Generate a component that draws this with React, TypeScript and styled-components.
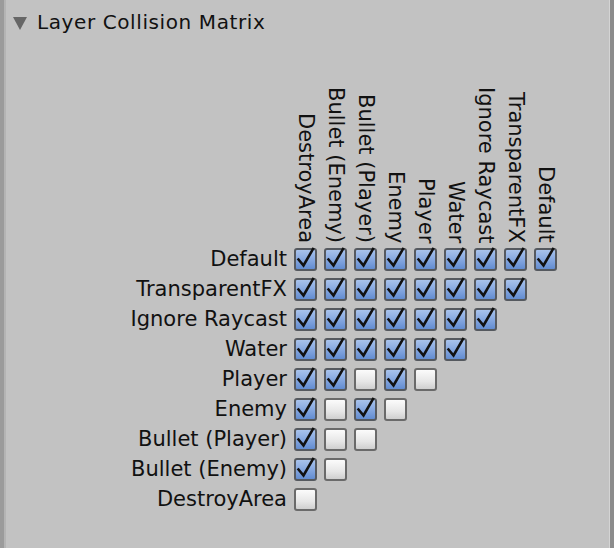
import styled, { createGlobalStyle } from 'styled-components';

const layers = [
	'Default',
	'TransparentFX',
	'Ignore Raycast',
	'Water',
	'Player',
	'Enemy',
	'Bullet (Player)',
	'Bullet (Enemy)',
	'DestroyArea',
];

// rows: one entry per layer, columns run from the last layer back to the row's own layer
const matrix: boolean[][] = [
	[true, true, true, true, true, true, true, true, true],
	[true, true, true, true, true, true, true, true],
	[true, true, true, true, true, true, true],
	[true, true, true, true, true, true],
	[true, true, false, true, false],
	[true, false, true, false],
	[true, false, false],
	[true, false],
	[false],
];

const GlobalStyle = createGlobalStyle`
	html, body {
		margin: 0;
		padding: 0;
		height: 100%;
		background: #c2c2c2;
	}
	#root {
		height: 100%;
	}
`;

export default function App() {
	const columns = [...layers].reverse();

	return (
		<>
			<GlobalStyle />
			<Panel>
				<Header>
					<Foldout width="14" height="14" viewBox="0 0 14 14">
						<polygon points="0,1 14,1 7,14" />
					</Foldout>
					<Title>Layer Collision Matrix</Title>
				</Header>
				<Matrix>
					<Corner />
					{columns.map(name => (
						<ColumnLabel key={name}>{name}</ColumnLabel>
					))}
					{layers.map((name, row) => (
						<Row key={name}>
							<RowLabel>{name}</RowLabel>
							{matrix[row].map((checked, col) => (
								<Checkbox key={col} checked={checked} />
							))}
						</Row>
					))}
				</Matrix>
			</Panel>
		</>
	);
}

function Checkbox({ checked }: { checked: boolean }) {
	return (
		<Box $checked={checked}>
			{checked && (
				<Tick width="23" height="23" viewBox="0 0 23 23">
					<path d="M4.5 11.5 L9.5 17.5 L19 1" />
				</Tick>
			)}
		</Box>
	);
}

const Panel = styled.div`
	box-sizing: border-box;
	height: 100%;
	min-height: 548px;
	border-left: 4px solid #9b9b9b;
	border-right: 4px solid #8c8c8c;
	box-shadow: inset 2px 0 0 #b4b4b4, inset -1px 0 0 #d4d4d4;
	background: #c2c2c2;
	font-family: 'DejaVu Sans', 'Noto Sans', sans-serif;
	color: #111;
`;

const Header = styled.div`
	display: flex;
	flex-direction: row;
	align-items: center;
	height: 44px;
	padding-left: 9px;
`;

const Foldout = styled.svg`
	fill: #666;
	margin-right: 10px;
	margin-top: 1px;
`;

const Title = styled.span`
	font-size: 20px;
	letter-spacing: 0.6px;
`;

const Matrix = styled.div`
	display: grid;
	grid-template-columns: 284px repeat(9, 30px);
	grid-template-rows: 155px;
	row-gap: 7px;
	padding-top: 42px;
	padding-left: 6px;
`;

const Corner = styled.div``;

const ColumnLabel = styled.div`
	writing-mode: vertical-rl;
	width: 23px;
	line-height: 23px;
	font-size: 21px;
	white-space: nowrap;
	align-self: end;
	margin-bottom: -2px;
`;

const Row = styled.div`
	display: contents;
`;

const RowLabel = styled.div`
	grid-column: 1;
	text-align: right;
	padding-right: 7px;
	font-size: 21px;
	line-height: 23px;
	white-space: nowrap;
`;

const Box = styled.div<{ $checked: boolean }>`
	position: relative;
	box-sizing: border-box;
	width: 23px;
	height: 23px;
	border: 2px solid ${p => (p.$checked ? '#55595f' : '#6a6a6a')};
	border-radius: 3px;
	background: ${p =>
		p.$checked
			? 'linear-gradient(to bottom, #a9c3ec 0%, #86a8e0 50%, #628cd0 100%)'
			: 'linear-gradient(to bottom, #fbfbfb 0%, #e6e6e6 60%, #cfcfcf 100%)'};
`;

const Tick = styled.svg`
	position: absolute;
	left: -2px;
	top: -2px;
	overflow: visible;

	path {
		fill: none;
		stroke: #111;
		stroke-width: 2.6;
		stroke-linecap: square;
		stroke-linejoin: miter;
	}
`;
